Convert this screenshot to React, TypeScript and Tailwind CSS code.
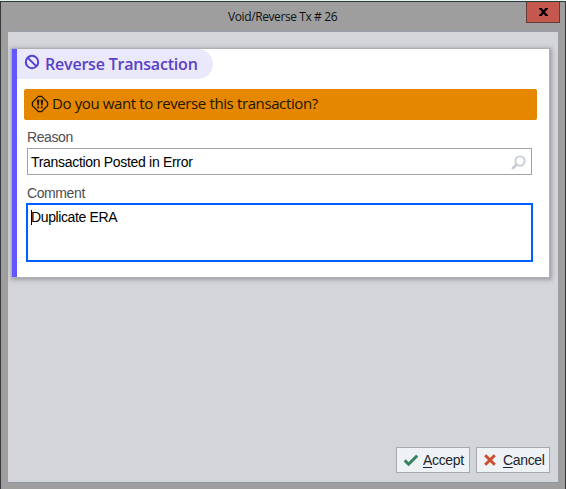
import React from "react";

function ProhibitIcon() {
  return (
    <svg className="mt-[5px] ml-[7px] size-4 shrink-0" viewBox="0 0 16 16" fill="none" stroke="#5140d4" strokeWidth="2">
      <circle cx="8" cy="8" r="6.2" />
      <path d="M3.6 3.6 12.4 12.4" />
    </svg>
  );
}

function AlertIcon() {
  return (
    <svg className="-mt-px ml-[7px] size-[18px] shrink-0" viewBox="0 0 18 18" fill="none" stroke="#211600" strokeWidth="1.3">
      <path d="M7.4 1.4h3.2l6 6v3.2l-6 6H7.4l-6-6V7.4z" strokeLinejoin="round" />
      <path d="M5.8 4.8h2.6L7.8 10.4H6.5zM9.6 4.8h2.6l-.7 5.6h-1.3z" fill="#211600" stroke="none" />
      <path d="M6.3 11.4h1.8v1.8H6.3zM9.9 11.4h1.8v1.8H9.9z" fill="#211600" stroke="none" />
    </svg>
  );
}

function SearchIcon() {
  return (
    <svg className="mt-px mr-[5px] size-[15px] shrink-0" viewBox="0 0 15 15" fill="none" stroke="#c6ccd5">
      <circle cx="9" cy="6" r="4.6" strokeWidth="1.9" />
      <path d="M5.1 10 1.8 13.2" strokeWidth="2.6" strokeLinecap="round" />
    </svg>
  );
}

function CheckIcon() {
  return (
    <svg className="ml-1.5 h-3.5 w-4 shrink-0" viewBox="0 0 16 14" fill="none" stroke="#348463" strokeWidth="3">
      <path d="M1.7 7.4 5.6 11.2 14.2 2.6" />
    </svg>
  );
}

function CrossIcon() {
  return (
    <svg className="ml-[7px] size-3 shrink-0" viewBox="0 0 12 12" fill="none" stroke="#c94f32" strokeWidth="3">
      <path d="M1.2 1.2 10.8 10.8M10.8 1.2 1.2 10.8" />
    </svg>
  );
}

const button =
  "flex h-[26px] w-[74px] items-center border border-[#a6a8ad] bg-[#eff2f5] text-[14px] leading-4 tracking-[-0.35px] text-[#20242e]";

export default function App() {
  return (
    <div className="h-[489px] w-[566px] overflow-hidden border-t border-[#e2f4f0] font-['Liberation_Sans',Arial,sans-serif]">
      <div className="flex h-[488px] flex-col border-x border-t border-x-[#37373c] border-t-[#303636] bg-[#9e9e9e]">
        <header className="flex h-[29px] shrink-0">
          <h1 className="mt-1.5 w-[525px] pl-[227px] font-['Open_Sans','Noto_Sans',sans-serif] text-[12px] leading-[18px] tracking-[-0.4px] whitespace-nowrap text-[#111]">
            Void/Reverse Tx # 26
          </h1>
          <button aria-label="Close" className="flex h-[21px] w-[34px] shrink-0 items-center justify-center border border-t-0 border-[#633c3a] bg-[#c4584f]">
            <svg className="h-2 w-[9px]" viewBox="0 0 9 8" stroke="#000" strokeWidth="2.3">
              <path d="M1.3.2 7.7 7.8M7.7.2 1.3 7.8" />
              <path d="M0 .6h3M6 .6h3M0 7.4h3M6 7.4h3" strokeWidth="1.2" />
            </svg>
          </button>
        </header>
        <main className="mx-[7px] flex h-[452px] flex-col border-t border-b border-t-[#9ba1ab] border-b-[#8e99a8] bg-[#d4d5da] pt-[17px]">
          <section className="ml-1 h-[228px] w-[537px] shrink-0 border-l-[5px] border-[#6157ff] bg-white shadow-[0_0_0_1px_#b0b0b4,1px_1px_4px_2px_rgba(80,80,90,0.4)]">
            <div className="flex h-[30px] w-[196px] rounded-r-full bg-[#eae8fb]">
              <ProhibitIcon />
              <h2 className="ml-[5px] font-['Open_Sans','Noto_Sans',sans-serif] text-[16px] leading-[30px] font-semibold tracking-[-0.2px] whitespace-nowrap text-[#5941c5]">
                Reverse Transaction
              </h2>
            </div>
            <div className="mt-2.5 ml-[7px] flex h-[31px] w-[513px] items-center rounded-[2px] bg-[#e68700]">
              <AlertIcon />
              <p className="-mt-[3px] ml-[3px] font-['Open_Sans','Noto_Sans',sans-serif] text-[15px] leading-5 tracking-[-0.38px] whitespace-nowrap text-[#211600]">
                Do you want to reverse this transaction?
              </p>
            </div>
            <div className="mt-[9px] ml-[10px] w-[505px]">
              <label className="block h-[19px] text-[14px] leading-4 tracking-[-0.4px] text-[#4d4d52]">Reason</label>
              <div className="flex h-[27px] items-center justify-between border border-[#a3a3a3] pl-[3px]">
                <span className="text-[14px] leading-4 tracking-[-0.31px] text-black">Transaction Posted in Error</span>
                <SearchIcon />
              </div>
              <label className="mt-2.5 block h-[18px] text-[14px] leading-4 tracking-[-0.4px] text-[#4d4d52]">Comment</label>
              <div className="-ml-px flex h-[59px] w-[507px] items-start border-2 border-[#0060ff] pt-[5px] pl-[3px]">
                <span className="h-[15px] w-px bg-black" />
                <span className="-mt-px -ml-px text-[14px] leading-4 tracking-[-0.38px] text-black">Duplicate ERA</span>
              </div>
            </div>
          </section>
          <footer className="mt-auto mb-[9px] ml-[388px] flex gap-1.5">
            <button className={button}>
              <CheckIcon />
              <span className="ml-[4px]"><u className="underline-offset-2">A</u>ccept</span>
            </button>
            <button className={button}>
              <CrossIcon />
              <span className="ml-[7px]"><u className="underline-offset-2">C</u>ancel</span>
            </button>
          </footer>
        </main>
      </div>
    </div>
  );
}
